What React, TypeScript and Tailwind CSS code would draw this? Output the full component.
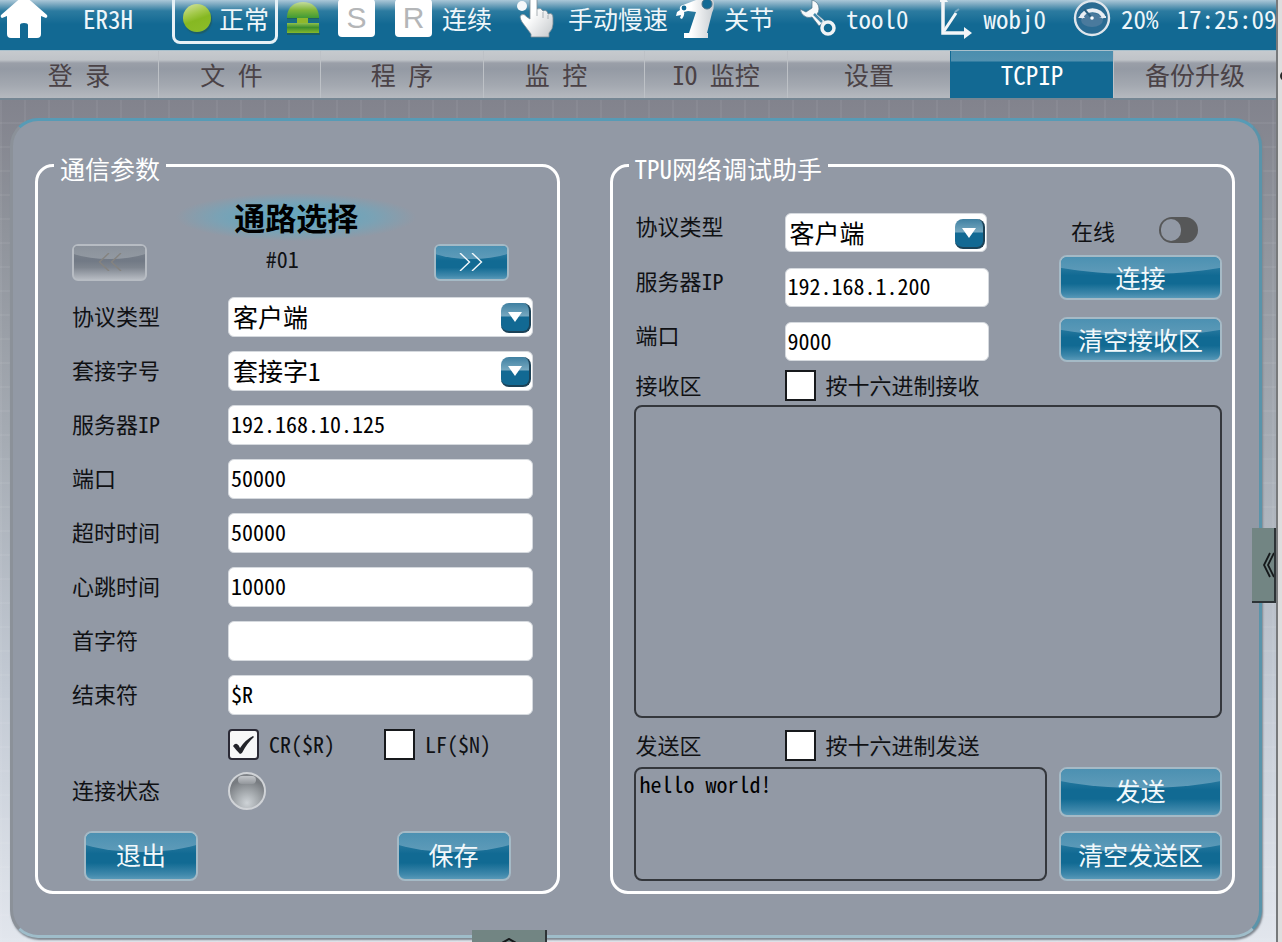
import { useState, type ReactNode } from "react";

const FONT =
  "font-['Noto_Sans_Mono_CJK_SC','Noto_Sans_CJK_SC','Liberation_Sans',sans-serif]";

function HomeIcon() {
  return (
    <svg viewBox="0 0 48 42" className="h-[42px] w-12 shrink-0" fill="#fff" aria-hidden="true">
      <path d="M24 -2 L47 18 Q48 20 46 21 L41 19 V37 Q41 41 37 41 H28 V28 Q28 26 24 26 Q20 26 20 28 V41 H11 Q7 41 7 37 V19 L2 21 Q0 20 1 18 Z" />
    </svg>
  );
}

function EStopIcon() {
  return (
    <svg viewBox="0 0 34 34" className="h-[34px] w-[34px] shrink-0" aria-hidden="true">
      <defs>
        <linearGradient id="dome" x1="0" y1="0" x2="0" y2="1">
          <stop offset="0" stopColor="#c4dc9c" />
          <stop offset=".5" stopColor="#7fb53a" />
          <stop offset="1" stopColor="#3f9a35" />
        </linearGradient>
        <linearGradient id="base" x1="0" y1="0" x2="0" y2="1">
          <stop offset="0" stopColor="#8fc04c" />
          <stop offset=".45" stopColor="#3d8f2e" />
          <stop offset="1" stopColor="#86b92c" />
        </linearGradient>
      </defs>
      <path d="M1 17 H33 V18 H1 Z M1 32 H34 V34 H1 Z" fill="#1d5a52" opacity=".7" />
      <path d="M1 15 C2 6 8 1 17 1 S32 6 33 15 V17 H1 Z" fill="url(#dome)" />
      <path d="M11 17 H22 V23 H11 Z" fill="#8fb82c" />
      <path d="M1 22 H33 V32 H1 Z" fill="url(#base)" />
      <path d="M1 18 H11 V21 H1 Z M22 18 H33 V21 H22 Z" fill="#1a6d80" />
    </svg>
  );
}

function HandIcon() {
  return (
    <svg viewBox="0 0 40 40" className="h-10 w-10 shrink-0" aria-hidden="true">
      <defs>
        <linearGradient id="hand" x1="0" y1="0" x2="1" y2="1">
          <stop offset=".4" stopColor="#fff" />
          <stop offset="1" stopColor="#c4c8cb" />
        </linearGradient>
      </defs>
      <circle cx="6" cy="8" r="5" fill="#f5f8fa" />
      <path
        d="M14 2 Q14 -2 17 -2 Q21 -2 21 2 V11 Q25 9 27 13 Q31 11 32 16 Q37 14 37 20 V26 Q37 31 33 35 V39 H15 V36 L6 24 Q3 19 5 17 Q8 15 11 19 L14 21 Z"
        fill="url(#hand)"
        stroke="#7b8b95"
        strokeWidth=".8"
      />
      <path d="M21 11 V18 M27 14 V20 M32 17 V21" stroke="#a9b0b5" strokeWidth="1" fill="none" />
    </svg>
  );
}

function ArmIcon() {
  return (
    <svg viewBox="0 0 40 42" className="h-[42px] w-10 shrink-0" aria-hidden="true">
      <defs>
        <linearGradient id="arm" x1="0" y1="0" x2="1" y2="0">
          <stop offset=".4" stopColor="#fff" />
          <stop offset="1" stopColor="#c9ced2" />
        </linearGradient>
      </defs>
      <path
        d="M7 8 L28 0 Q37 -1 38 6 Q38 12 36 16 L31 36 H32 V41 H8 V36 H13 L20 15 L12 14 L8 15 Q9 18 6 22 L4 21 L5 18 L0 19 L1 15 L4 13 Q3 9 7 8 Z"
        fill="url(#arm)"
      />
      <circle cx="31" cy="7" r="5" fill="#126a95" stroke="#4a7187" strokeWidth="1" />
      <circle cx="8" cy="11" r="2.4" fill="#126a95" />
    </svg>
  );
}

function WrenchIcon() {
  return (
    <svg viewBox="0 0 36 36" className="h-9 w-9 shrink-0" aria-hidden="true">
      <path
        d="M12 0 Q19 2 19 9 Q19 12 17 14 L25 21 L19 26 L12 17 Q9 18 6 17 Q1 15 0 9 L6 12 L12 8 L12 5 Z"
        fill="#f7f9fa"
        stroke="#4e7388"
        strokeWidth=".7"
      />
      <path d="M14 14 L22 22" stroke="#3f86a9" strokeWidth="2.5" />
      <circle cx="28" cy="28" r="6" fill="#126a93" stroke="#f1f3f5" strokeWidth="3.500" />
    </svg>
  );
}

function AxesIcon() {
  return (
    <svg viewBox="0 0 32 42" className="h-[42px] w-8 shrink-0" aria-hidden="true">
      <g stroke="#f3f6f8" fill="none">
        <path d="M3 4 V36 H26" strokeWidth="3.500" />
        <path d="M4 34 L16 16" strokeWidth="3" />
      </g>
      <path d="M3 -3 L8 5 H-2 Z M24 30 L32 36 L24 42 Z" fill="#f3f6f8" />
      <path d="M15 15 L19 12" stroke="#7fabc3" strokeWidth="2" />
    </svg>
  );
}

function SpeedIcon() {
  return (
    <svg viewBox="0 0 38 38" className="h-[38px] w-[38px] shrink-0" aria-hidden="true">
      <circle cx="19" cy="19" r="17" fill="#2a6b92" stroke="#dfe6ec" strokeWidth="2.4" />
      <ellipse cx="19" cy="21" rx="11" ry="7" fill="#4a7a9d" />
      <path d="M8 19 A12 11 0 0 1 31 19" fill="none" stroke="#e9eef3" strokeWidth="4" />
      <path d="M5 19 H12 L9 15 Z M26 19 H33 V17 Z" fill="#e9eef3" />
      <path d="M11 10 L19 19" stroke="#2a5f80" strokeWidth="2" />
      <circle cx="19" cy="19" r="1.8" fill="#fff" />
    </svg>
  );
}

function LetterTile({ children }: { children: ReactNode }) {
  return (
    <span className="flex h-[38px] w-[37px] shrink-0 items-center justify-center rounded bg-white font-['Liberation_Sans',sans-serif] text-[30px] leading-[34px] text-[#b4b6b8]">
      {children}
    </span>
  );
}

function TopBar() {
  return (
    <header className="flex h-[50px] shrink-0 items-center overflow-hidden bg-[linear-gradient(#abc8d8_0px,#7fabc2_4px,#2c7ba0_11px,#126993_24px,#126993_100%)] pb-3.5 text-[25px] leading-[30px] whitespace-nowrap text-[#eef6fa]">
      <a href="#home" aria-label="主页" className="shrink-0">
        <HomeIcon />
      </a>
      <span className="ml-[35px]">ER3H</span>
      <button
        type="button"
        className="ml-[39px] flex h-[52px] w-[106px] shrink-0 items-center gap-2 rounded-lg border-3 border-[#e6f1f6] pl-2"
      >
        <span className="h-7 w-7 shrink-0 rounded-full bg-[linear-gradient(160deg,#cfe09a_5%,#a3c94a_35%,#86b822_55%,#8dbd2a_100%)] shadow-[1px_2px_1px_#1d5d6a]" />
        正常
      </button>
      <span className="ml-2">
        <EStopIcon />
      </span>
      <span className="ml-[18px]">
        <LetterTile>S</LetterTile>
      </span>
      <span className="ml-5 flex items-center gap-2.5">
        <LetterTile>R</LetterTile>
        连续
      </span>
      <span className="ml-6 flex items-center gap-3">
        <HandIcon />
        手动慢速
      </span>
      <span className="ml-2 flex items-center gap-2">
        <ArmIcon />
        关节
      </span>
      <span className="ml-[26px] flex items-center gap-2.5">
        <WrenchIcon />
        tool0
      </span>
      <span className="ml-[31px] flex items-center gap-3">
        <AxesIcon />
        wobj0
      </span>
      <span className="ml-[27px] flex items-center gap-2.5">
        <SpeedIcon />
        20%
      </span>
      <time className="ml-[18px]">17:25:09</time>
    </header>
  );
}

const TABS = [
  { label: "登 录", extra: "" },
  { label: "文 件", extra: "pr-4" },
  { label: "程 序", extra: "" },
  { label: "监 控", extra: "pr-4" },
  { label: "IO 监控", extra: "" },
  { label: "设置", extra: "" },
  { label: "TCPIP", extra: "" },
  { label: "备份升级", extra: "" },
];

function NavBar() {
  return (
    <nav className="grid h-[50px] shrink-0 grid-cols-[158fr_162fr_163fr_161fr_143fr_163fr_163fr_163fr] border-t border-b-2 border-t-[#a9c0cc] border-b-[#758693] text-[25px] leading-[30px] whitespace-nowrap">
      {TABS.map((t) => {
        const active = t.label === "TCPIP";
        return (
          <a
            key={t.label}
            href={`#${t.label}`}
            aria-current={active ? "page" : undefined}
            className={`flex items-center justify-center border-l pb-0.5 first:border-l-0 ${t.extra} ${
              active
                ? "border-[#126993] bg-[linear-gradient(#4b8eae_0px,#5291b0_10px,#126993_11px,#126993_100%)] text-white"
                : "border-[#bdc1c6] bg-[linear-gradient(#c6cace_0px,#bfc3c8_9px,#9a9fa8_12px,#949aa4_18px,#a3a8b0_34px,#b5b9bf_100%)] text-[#4a4246]"
            }`}
          >
            {t.label}
          </a>
        );
      })}
    </nav>
  );
}

const GLOSS =
  "relative overflow-hidden border-2 before:absolute before:top-[-58%] before:left-[-20%] before:h-full before:w-[140%] before:rounded-[50%]";
const BLUE =
  "border-[#a5bac6] bg-[linear-gradient(#3f88ab_0%,#116a93_45%,#116a93_65%,#3f88ab_90%,#5899b8_100%)] text-[#f2f8fb] before:bg-[linear-gradient(#4a90b1_55%,#5f9bb9)]";
const GRAY =
  "border-[#b7bcc3] bg-[linear-gradient(#7d848e_0%,#717985_45%,#7e858f_65%,#b4b9c0_100%)] text-[#85837f] before:bg-[linear-gradient(#7f8691,#9299a2)]";

function GlossButton({
  children,
  className = "",
  disabled = false,
  label,
}: {
  children: ReactNode;
  className?: string;
  disabled?: boolean;
  label?: string;
}) {
  return (
    <button
      type="button"
      disabled={disabled}
      aria-label={label}
      className={`${GLOSS} ${disabled ? GRAY : BLUE} flex items-center justify-center text-[25px] leading-[30px] whitespace-nowrap ${className}`}
    >
      <span className="relative">{children}</span>
    </button>
  );
}

function Chevrons({ flip = false }: { flip?: boolean }) {
  return (
    <svg
      viewBox="0 0 24 18"
      className={`h-[18px] w-6 ${flip ? "rotate-180" : ""}`}
      fill="none"
      stroke="currentColor"
      strokeWidth="1.4"
      aria-hidden="true"
    >
      <path d="M1 0 L10.500 9 L1 18 M13 0 L22.500 9 L13 18" />
    </svg>
  );
}

function Select({ id, options, className = "" }: { id: string; options: string[]; className?: string }) {
  return (
    <div className={`relative ${className}`}>
      <select
        id={id}
        className="h-full w-full appearance-none rounded-md border border-[#d5d9de] bg-white pr-10 pb-0.5 pl-1 text-[25px] leading-[30px] text-black"
      >
        {options.map((o) => (
          <option key={o}>{o}</option>
        ))}
      </select>
      <span className="pointer-events-none absolute inset-y-0 right-0.5 flex items-center pt-0.5">
        <span className="flex h-[30px] w-[30px] items-center justify-center rounded-lg border-r-2 border-b-2 border-[#1c4257] bg-[linear-gradient(#3f80a1_0px,#76a8c0_13px,#126993_14px,#126993_100%)]">
          <svg viewBox="0 0 14 10" className="h-2.5 w-3.5" fill="#fff" aria-hidden="true">
            <path d="M0 0 H14 L7 10 Z" />
          </svg>
        </span>
      </span>
    </div>
  );
}

function TextInput({ id, value, className = "" }: { id: string; value: string; className?: string }) {
  return (
    <input
      id={id}
      type="text"
      defaultValue={value}
      className={`min-w-0 rounded-md border border-[#d5d9de] bg-white px-0.5 pb-1 text-[22px] leading-[30px] text-black ${className}`}
    />
  );
}

function CheckBox({
  id,
  children,
  checked = false,
}: {
  id: string;
  children: ReactNode;
  checked?: boolean;
}) {
  return (
    <label htmlFor={id} className="flex items-center gap-2.5 leading-[26px] whitespace-nowrap">
      <span className="relative flex h-[31px] w-[31px]">
        <input
          id={id}
          type="checkbox"
          defaultChecked={checked}
          className="peer h-full w-full appearance-none border-2 border-[#17191c] bg-white checked:rounded-sm checked:border-[#2a2935] checked:bg-[#f7f7f8]"
        />
        <svg
          viewBox="0 0 31 31"
          className="pointer-events-none absolute inset-0 hidden peer-checked:block"
          fill="#22232a"
          aria-hidden="true"
        >
          <path d="M5 17 Q7 14 9 15 Q11 16 12 19 Q17 11 25 7 L26 8 Q19 14 14 24 L12 25 Q8 21 5 17 Z" />
        </svg>
      </span>
      <span className="pb-1">{children}</span>
    </label>
  );
}

type Field = { id: string; label: string; value?: string; options?: string[] };

const PARAMS: Field[] = [
  { id: "proto", label: "协议类型", options: ["客户端", "服务器"] },
  { id: "socket", label: "套接字号", options: ["套接字1", "套接字2"] },
  { id: "ip", label: "服务器IP", value: "192.168.10.125" },
  { id: "port", label: "端口", value: "50000" },
  { id: "timeout", label: "超时时间", value: "50000" },
  { id: "beat", label: "心跳时间", value: "10000" },
  { id: "head", label: "首字符", value: "" },
  { id: "tail", label: "结束符", value: "$R" },
];

const FIELDSET =
  "flex min-w-0 flex-col rounded-[18px] border-3 border-white text-[22px] leading-[30px] text-[#101114]";
const LEGEND = "ml-4 px-1.5 pt-1.5 text-[25px] leading-[30px] text-white";

function CommParams() {
  return (
    <fieldset className={FIELDSET}>
      <legend className={LEGEND}>通信参数</legend>
      <div className="flex flex-1 flex-col pr-6 pb-2.5 pl-[34px]">
        <h2 className="mt-2.5 mr-3 flex h-12 w-60 items-center justify-center self-center bg-[radial-gradient(closest-side,#68a6bd_30%,#7aa2b5_65%,#9299a500_100%)] text-[31px] leading-10 font-bold text-black">
          通路选择
        </h2>
        <div className="mt-0.5 mr-6 flex items-center justify-between">
          <GlossButton disabled label="上一通路" className="h-[37px] w-[75px] rounded-md">
            <Chevrons flip />
          </GlossButton>
          <output className="pr-4 pb-2">#01</output>
          <GlossButton label="下一通路" className="h-[37px] w-[75px] rounded-md">
            <Chevrons />
          </GlossButton>
        </div>
        <div className="mt-4 grid grid-cols-[156px_1fr] items-center gap-y-3.5">
          {PARAMS.map((f) => (
            <div key={f.id} className="col-span-2 grid grid-cols-subgrid items-center">
              <label htmlFor={f.id} className="pb-1">
                {f.label}
              </label>
              {f.options ? (
                <Select id={f.id} options={f.options} className="h-10" />
              ) : (
                <TextInput id={f.id} value={f.value ?? ""} className="h-10" />
              )}
            </div>
          ))}
        </div>
        <div className="mt-3.5 ml-[156px] flex">
          <div className="w-[156px]">
            <CheckBox id="cr" checked>
              CR($R)
            </CheckBox>
          </div>
          <CheckBox id="lf">LF($N)</CheckBox>
        </div>
        <div className="mt-3 flex items-center">
          <span className="w-[156px] pb-1">连接状态</span>
          <span className="relative h-[38px] w-[38px] rounded-full border-2 border-[#d0d3d7] bg-[radial-gradient(circle_at_50%_85%,#ced3d7_0%,#a3a8ac_35%,#777b80_70%,#8a8e93_100%)] before:absolute before:top-0.5 before:left-2 before:h-2 before:w-[18px] before:rounded-full before:bg-[linear-gradient(#c3c6ca,#93979c)]" />
        </div>
        <div className="mt-auto mr-[22px] ml-3 flex justify-between pt-4">
          <GlossButton className="h-[50px] w-[114px] rounded-lg pb-1">退出</GlossButton>
          <GlossButton className="h-[50px] w-[114px] rounded-lg pb-1">保存</GlossButton>
        </div>
      </div>
    </fieldset>
  );
}

function DebugAssistant() {
  const [online, setOnline] = useState(false);
  return (
    <fieldset className={FIELDSET}>
      <legend className={LEGEND}>TPU网络调试助手</legend>
      <div className="flex flex-1 flex-col pr-2.5 pb-2.5 pl-[21px]">
        <div className="mt-[30px] flex justify-between">
          <div className="grid grid-cols-[151px_204px] gap-y-[15px] leading-6">
            <label htmlFor="d-proto" className="pl-0.5">
              协议类型
            </label>
            <Select id="d-proto" options={["客户端", "服务器"]} className="mr-0.5 h-[39px]" />
            <label htmlFor="d-ip" className="pl-0.5">
              服务器IP
            </label>
            <TextInput id="d-ip" value="192.168.1.200" className="h-[39px]" />
            <label htmlFor="d-port" className="pl-0.5">
              端口
            </label>
            <TextInput id="d-port" value="9000" className="h-[39px]" />
          </div>
          <div className="flex w-[163px] flex-col">
            <label htmlFor="online" className="mt-0.5 flex items-center justify-between pr-6 pl-3">
              在线
              <input
                id="online"
                type="checkbox"
                role="switch"
                checked={online}
                onChange={(e) => setOnline(e.target.checked)}
                className="relative h-[26px] w-[39px] appearance-none rounded-full bg-[#565758] before:absolute before:top-0.5 before:left-0.5 before:h-[22px] before:w-5 before:rounded-full before:bg-[#9299a5] checked:bg-[#126993] checked:before:left-[17px]"
              />
            </label>
            <GlossButton className="mt-2.5 h-[45px] rounded-lg pb-0.5">连接</GlossButton>
            <GlossButton className="mt-[17px] h-[45px] rounded-lg pb-0.5">清空接收区</GlossButton>
          </div>
        </div>
        <div className="mt-2 grid grid-cols-[151px_1fr] items-center leading-[26px]">
          <label htmlFor="rx" className="pb-1 pl-0.5">
            接收区
          </label>
          <CheckBox id="rx-hex">按十六进制接收</CheckBox>
        </div>
        <textarea
          id="rx"
          readOnly
          className="mt-1 min-h-[200px] flex-1 resize-none rounded-lg border-2 border-[#34373c] bg-transparent px-1 text-black"
        />
        <div className="mt-3 grid grid-cols-[151px_1fr] items-center leading-[26px]">
          <label htmlFor="tx" className="pb-1 pl-0.5">
            发送区
          </label>
          <CheckBox id="tx-hex">按十六进制发送</CheckBox>
        </div>
        <div className="mt-1.5 flex gap-3">
          <textarea
            id="tx"
            defaultValue="hello world!"
            className="h-[114px] min-w-0 flex-1 resize-none rounded-lg border-2 border-[#34373c] bg-transparent px-1 leading-7 text-black"
          />
          <div className="flex w-[163px] flex-col justify-between">
            <GlossButton className="h-[50px] rounded-lg pb-1">发送</GlossButton>
            <GlossButton className="h-[50px] rounded-lg pb-1">清空发送区</GlossButton>
          </div>
        </div>
      </div>
    </fieldset>
  );
}

export default function App() {
  return (
    <div className={`flex min-h-screen bg-[#dcdcdc] ${FONT}`}>
      <div className="relative flex min-w-0 flex-1 flex-col overflow-hidden">
        <TopBar />
        <NavBar />
        <main className="flex flex-1 flex-col bg-[repeating-linear-gradient(90deg,#ffffff0d_0px,#ffffff0d_2px,transparent_2px,transparent_24px),repeating-linear-gradient(transparent_0px,transparent_22px,#ffffff0d_22px,#ffffff0d_24px),linear-gradient(#82838d_0%,#8f939b_15%,#a5abb3_40%,#c3cad4_70%,#e2e6ed_100%)] pt-[18px] pr-3.5 pb-1 pl-2.5">
          <div className="grid flex-1 grid-cols-[525fr_626fr] gap-x-[50px] rounded-[28px] border-3 border-t-[#579bb6] border-r-[#5a94aa] border-b-[#9fbdca] border-l-[#8b9199] bg-[#9299a5] pt-[26px] pr-6 pb-[41px] pl-[22px] shadow-[1px_2px_2px_#7f8790]">
            <CommParams />
            <DebugAssistant />
          </div>
        </main>
        <button
          type="button"
          aria-label="展开侧栏"
          className="absolute top-[528px] right-0 h-[75px] w-6 overflow-hidden border-r-2 border-b-2 border-[#2d3336] bg-[#728583] text-black"
        >
          <svg viewBox="0 0 14 26" className="ml-2.5 h-[26px] w-3.5" fill="none" stroke="#15181a" strokeWidth="1.8" aria-hidden="true">
            <path d="M8 1 L2 13 L8 25 M12 1 L6 13 L12 25" />
          </svg>
        </button>
        <button
          type="button"
          aria-label="展开底栏"
          className="absolute bottom-0 left-[472px] flex h-3 w-[75px] items-end justify-center overflow-hidden border-r-2 border-[#2d3336] bg-[#728583]"
        >
          <svg viewBox="0 0 14 4" className="h-1 w-3.5" fill="none" stroke="#15181a" strokeWidth="2" aria-hidden="true">
            <path d="M0 5 L7 1 L14 5" />
          </svg>
        </button>
      </div>
      <div className="w-1.5 shrink-0 overflow-hidden border-l-2 border-[#77797b] bg-[#dedede] pt-[71px]">
        <div className="ml-0.5 h-2.5 w-2.5 rounded-full bg-[#2b2b2b]" />
      </div>
    </div>
  );
}
